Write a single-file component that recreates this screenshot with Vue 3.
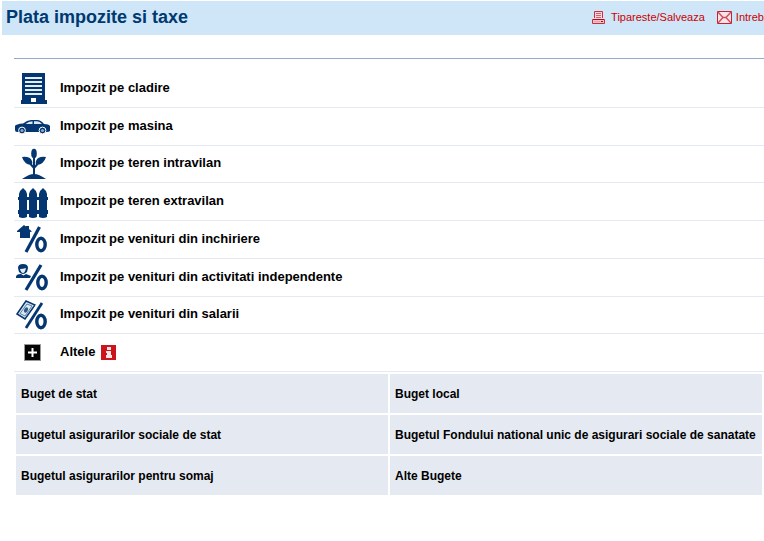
<script setup>
const taxes = [
  { icon: 'building', label: 'Impozit pe cladire' },
  { icon: 'car', label: 'Impozit pe masina' },
  { icon: 'plant', label: 'Impozit pe teren intravilan' },
  { icon: 'fence', label: 'Impozit pe teren extravilan' },
  { icon: 'house', label: 'Impozit pe venituri din inchiriere' },
  { icon: 'person', label: 'Impozit pe venituri din activitati independente' },
  { icon: 'money', label: 'Impozit pe venituri din salarii' },
  { icon: 'plus', label: 'Altele', info: true }
]

const budgets = [
  ['Buget de stat', 'Buget local'],
  ['Bugetul asigurarilor sociale de stat', 'Bugetul Fondului national unic de asigurari sociale de sanatate'],
  ['Bugetul asigurarilor pentru somaj', 'Alte Bugete']
]
</script>

<template>
  <main class="page">
    <header class="header">
      <h1>Plata impozite si taxe</h1>
      <nav class="tools">
        <a href="#" class="print">
          <svg width="13" height="13" viewBox="0 0 13 13" aria-hidden="true">
            <path d="M2.500 7V.5h8V7" fill="#f3d6df" stroke="#c8303c" />
            <path d="M4 2.500h5M4 4.500h5M4 6.500h5" stroke="#d4606c" />
            <path d="M.5 8.500h12v4H.5z" fill="#efc4cc" stroke="#c8303c" />
            <path d="M1 8.500h11" stroke="#c00" />
            <path d="M2 10.500h6" stroke="#e4a4ae" />
            <path d="M9 10.500h2" stroke="#c00" />
          </svg>
          <span>Tipareste/Salveaza</span>
        </a>
        <a href="#" class="mail">
          <svg width="15" height="13" viewBox="0 0 15 13" aria-hidden="true">
            <path d="M.5 .5h14v12H.5z" fill="#f7e4e9" stroke="#c8202c" />
            <path d="M1 1l5 5.500h3L14 1M1 12l5-5.500M14 12L9 6.500" fill="none" stroke="#d04c58" stroke-width="1.300" />
          </svg>
          <span>Intreb</span>
        </a>
      </nav>
    </header>

    <section class="content">
      <ul class="taxes">
        <li v-for="tax in taxes" :key="tax.icon">
          <a href="#">
            <svg class="icon" width="36" height="36" viewBox="0 0 36 36" fill="#043771" aria-hidden="true">
              <g v-if="tax.icon === 'building'">
                <path d="M8 3h23v27h2v4H7v-4h1z" />
                <path d="M11 8h17M11 12h17M11 16h17M11 20h17M11 24h17" stroke="#e4eef6" stroke-width="1.800" />
                <path d="M17 28h5v4h-5z" fill="#fff" />
              </g>
              <g v-else-if="tax.icon === 'car'">
                <path d="M1 18q1-2 8-2.500 4-3.500 8-3.500h6q4 0 7 4 5 0 6 2v5q-1 1-3 1H3q-2 0-2-2z" />
                <path d="M11.500 16q3-2.700 7-2.700V16zM20 13.300h3q3 0 5 2.700h-8z" fill="#dde7f0" />
                <g stroke="#fff">
                  <circle cx="8" cy="22.500" r="3.400" /><circle cx="28.500" cy="22.500" r="3.400" />
                </g>
                <g fill="#8fa9c3"><circle cx="8" cy="22.500" r="1.600" /><circle cx="28.500" cy="22.500" r="1.600" /></g>
              </g>
              <g v-else-if="tax.icon === 'plant'">
                <ellipse cx="20" cy="7.500" rx="2.800" ry="4.800" />
                <path d="M8 11q8-1 10 4 1 3-1 4-7-1-9-8zM32 11q-8-1-10 4-1 3 1 4 7-1 9-8z" />
                <path d="M20 11v18M16.500 18l3.500 4 3.500-4" fill="none" stroke="#043771" stroke-width="2" />
                <path d="M8 33q3-2 7-4 5-2 10 0 4 2 7 4z" />
              </g>
              <g v-else-if="tax.icon === 'fence'">
                <path d="M4 13h30v3H4zM4 26h30v4H4z" />
                <path d="M5 33V10q1-4 4-6 3 2 4 6v23q-4 2-8 0zM15 33V10q1-4 4-6 3 2 4 6v23q-4 2-8 0zM25 33V10q1-4 4-6 3 2 4 6v23q-4 2-8 0z" />
              </g>
              <g v-else-if="tax.icon === 'house'">
                <path d="M3 10l7-6 2 1.500V5h3v3l3 2.500-2 .5v6H6v-6H3z" />
                <path d="M12 31L25.500 6" stroke="#043771" stroke-width="3.200" />
                <ellipse cx="27" cy="23.500" rx="4.200" ry="6.200" fill="none" stroke="#043771" stroke-width="3.400" />
              </g>
              <g v-else-if="tax.icon === 'person'">
                <path d="M4 9q0-4 5-4 5 0 5 4l-1 4q-4 4-8 0z" />
                <path d="M6 10q3 0 6-1-1 5-3 5t-3-4z" fill="#e6eef5" />
                <path d="M2 18q0-3 5-3l2.500 1.500L12 15l5 2-1 2H2z" />
                <path d="M12 31L27 6" stroke="#043771" stroke-width="3.200" />
                <ellipse cx="28" cy="23.500" rx="4.200" ry="6.200" fill="none" stroke="#043771" stroke-width="3.400" />
              </g>
              <g v-else-if="tax.icon === 'money'">
                <path d="M3 17L12 4l9 4-10 14z" fill="#dce8f2" stroke="#043771" stroke-width="1.500" />
                <path d="M6 16.500L13 7l5 2-7 10z" fill="none" stroke="#5c80a2" />
                <ellipse cx="12" cy="13" rx="1.800" ry="2.800" fill="#2d5a87" transform="rotate(30 12 13)" />
                <path d="M13 29L27 5" stroke="#fff" stroke-width="6" />
                <path d="M12 31L28 6" stroke="#043771" stroke-width="2.800" />
                <ellipse cx="27" cy="24.500" rx="4.200" ry="6.200" fill="none" stroke="#043771" stroke-width="3.400" />
              </g>
              <g v-else>
                <path d="M10.500 9.500h16v16h-16z" fill="#050505" stroke="#999" />
                <path d="M14 17.500h9M18.500 13v9" stroke="#fff" stroke-width="2" />
              </g>
            </svg>
            <span class="label">{{ tax.label }}</span>
            <svg v-if="tax.info" class="info" width="15" height="15" viewBox="0 0 15 15" aria-hidden="true">
              <path d="M0 0h15v15H0z" fill="#c9151b" />
              <path d="M6 2h4v3H6zM5 6h5v4h1v3H5v-3h1V8H5z" fill="#f8e4e4" />
            </svg>
          </a>
        </li>
      </ul>

      <table class="budgets">
        <tbody>
          <tr v-for="row in budgets" :key="row[0]">
            <td v-for="name in row" :key="name"><a href="#">{{ name }}</a></td>
          </tr>
        </tbody>
      </table>
    </section>
  </main>
</template>

<style>
body {
  margin: 0;
  background: #fff;
}
</style>

<style scoped>
.page {
  padding: 1px 0 0 2px;
  font-family: "Liberation Sans", Arial, sans-serif;
  color: #000;
}
a {
  color: inherit;
  text-decoration: none;
}
svg {
  display: block;
  flex: none;
}
.header {
  display: flex;
  align-items: center;
  justify-content: space-between;
  min-height: 32px;
  padding: 0 0 2px 4px;
  background: #cee6f8;
}
h1 {
  margin: 0;
  color: #003870;
  font-size: 18px;
  line-height: 20px;
}
.tools {
  display: flex;
  gap: 12px;
  color: #c00;
  font-size: 11px;
  line-height: 16px;
  white-space: nowrap;
}
.tools a {
  display: flex;
  align-items: center;
}
.print {
  gap: 6px;
}
.mail {
  gap: 4px;
}
.content {
  padding: 23px 0 0 12px;
}
.taxes {
  display: grid;
  grid-auto-rows: 1fr;
  min-height: 302px;
  margin: 0;
  padding: 11px 0 0;
  border-top: 1px solid #93abcc;
  list-style: none;
}
.taxes li {
  display: flex;
  border-bottom: 1px solid #e5eaf2;
}
.taxes a {
  display: flex;
  align-items: center;
  flex: 1;
  font-size: 13px;
  font-weight: bold;
  line-height: 16px;
}
.icon {
  margin-right: 10px;
}
.label {
  padding-bottom: 1px;
}
.info {
  margin-left: 6px;
}
.budgets {
  width: 100%;
  table-layout: fixed;
  border-spacing: 2px;
}
.budgets td {
  height: 39px;
  padding: 0 5px;
  background: #e5eaf2;
  font-size: 12px;
  font-weight: bold;
  line-height: 16px;
}
</style>
